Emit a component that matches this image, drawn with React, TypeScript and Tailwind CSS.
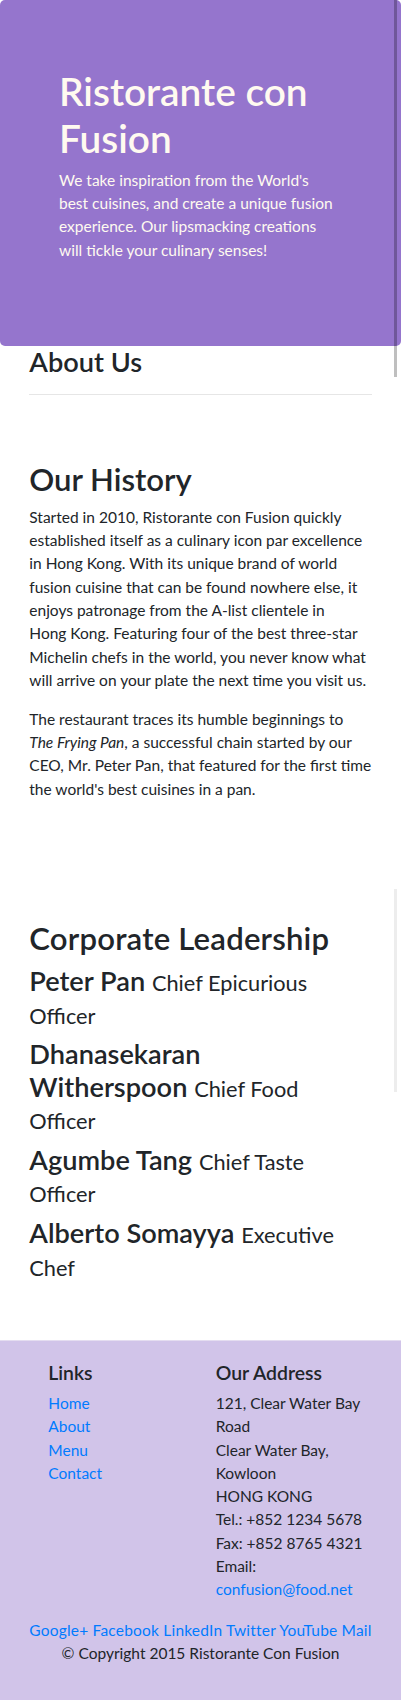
const leaders = [
  { name: "Peter Pan", designation: "Chief Epicurious Officer" },
  { name: "Dhanasekaran Witherspoon", designation: "Chief Food Officer" },
  { name: "Agumbe Tang", designation: "Chief Taste Officer" },
  { name: "Alberto Somayya", designation: "Executive Chef" },
];

const pageLinks = ["Home", "About", "Menu", "Contact"];
const socials = ["Google+", "Facebook", "LinkedIn", "Twitter", "YouTube", "Mail"];

// line breaks as they fall in the reference
const historyLines = [
  "Started in 2010, Ristorante con Fusion quickly",
  "established itself as a culinary icon par excellence",
  "in Hong Kong. With its unique brand of world",
  "fusion cuisine that can be found nowhere else, it",
  "enjoys patronage from the A-list clientele in",
  "Hong Kong. Featuring four of the best three-star",
  "Michelin chefs in the world, you never know what",
  "will arrive on your plate the next time you visit us.",
];

const taglineLines = [
  "We take inspiration from the World's",
  "best cuisines, and create a unique fusion",
  "experience. Our lipsmacking creations",
  "will tickle your culinary senses!",
];

function Lines({ lines }: { lines: string[] }) {
  return (
    <>
      {lines.map((line, i) => (
        <span key={i}>
          {line}
          {i < lines.length - 1 && <br />}
        </span>
      ))}
    </>
  );
}

function Jumbotron() {
  return (
    <header className="rounded-[5px] bg-[#9575cd] text-[#fffaf0] px-[59px] pt-[68px] pb-[68px]">
      <h1 className="text-[38.8px] leading-[1.2] font-semibold mb-[7.8px]">
        Ristorante con Fusion
      </h1>
      <p className="text-[15.5px] leading-[23.3px] mb-[15.5px]">
        <Lines lines={taglineLines} />
      </p>
    </header>
  );
}

function Footer() {
  return (
    <footer className="border-t border-[#e4ddf0] bg-[#d1c4e9] pt-[19.4px] pb-[19.4px]">
      <div className="flex">
        <div className="w-[215.7px] pl-[48.3px]">
          <h5 className="text-[19.4px] leading-[1.2] font-semibold mb-[7.8px]">Links</h5>
          <ul>
            {pageLinks.map((l) => (
              <li key={l}>
                <a href="#" className="text-[#007bff]">
                  {l}
                </a>
              </li>
            ))}
          </ul>
        </div>
        <div className="w-[165px]">
          <h5 className="text-[19.4px] leading-[1.2] font-semibold mb-[7.8px]">Our Address</h5>
          <address className="not-italic mb-[17px]">
            121, Clear Water Bay Road
            <br />
            Clear Water Bay, Kowloon
            <br />
            HONG KONG
            <br />
            Tel.: +852 1234 5678
            <br />
            Fax: +852 8765 4321
            <br />
            Email: <a href="#" className="text-[#007bff]">confusion@food.net</a>
          </address>
        </div>
      </div>
      <div className="text-center tracking-[0.2px]">
        {socials.map((s, i) => (
          <span key={s}>
            <a href="#" className="text-[#007bff]">
              {s}
            </a>
            {i < socials.length - 1 ? " " : ""}
          </span>
        ))}
      </div>
      <p className="text-center mb-[15.5px]">© Copyright 2015 Ristorante Con Fusion</p>
    </footer>
  );
}

export default function App() {
  return (
    <div className="relative w-[401px] min-h-[1701px] bg-white text-[#212529] text-[15.5px] leading-[23.3px] [font-family:Lato,sans-serif]">
      <Jumbotron />

      <main className="px-[29.3px]">
        {/* About Us */}
        <h3 className="text-[27.2px] leading-[1.2] font-semibold">About Us</h3>
        <hr className="mt-[15.5px] border-t border-[#e6e6e6]" />

        {/* Our History */}
        <section className="mt-[15.5px] pt-[50.5px] pb-[48.5px]">
          <h2 className="text-[31.1px] leading-[1.2] font-semibold mb-[7.8px]">Our History</h2>
          <p className="mb-[15.5px]">
            <Lines lines={historyLines} />
          </p>
          <p className="mb-[15.5px]">
            The restaurant traces its humble beginnings to
            <br />
            <em>The Frying Pan</em>, a successful chain started by our
            <br />
            CEO, Mr. Peter Pan, that featured for the first time
            <br />
            the world's best cuisines in a pan.
          </p>
        </section>

        {/* Corporate Leadership */}
        <section className="pt-[55px] pb-[50.5px]">
          <h2 className="text-[31.1px] leading-[1.2] font-semibold tracking-[0.2px] mb-[7.8px]">
            Corporate Leadership
          </h2>
          <div className="w-[325px]">
            {leaders.map((leader) => (
              <h3 key={leader.name} className="text-[27.2px] leading-[1.2] font-semibold mb-[7.8px]">
                {leader.name} <small className="text-[80%] font-normal">{leader.designation}</small>
              </h3>
            ))}
          </div>
        </section>
      </main>

      <Footer />

      {/* overlay scrollbars */}
      <div className="absolute left-[394px] top-0 w-[3px] h-[377px] bg-black/25" />
      <div className="absolute left-[394px] top-[889px] w-[3px] h-[203px] bg-black/[0.07]" />
    </div>
  );
}
